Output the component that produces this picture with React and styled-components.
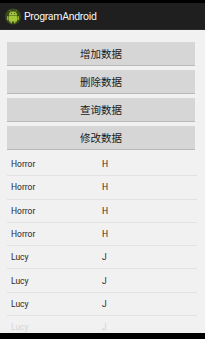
import styled, { createGlobalStyle } from 'styled-components';

const GlobalStyle = createGlobalStyle`
    html, body {
        margin: 0;
        padding: 0;
        background: #000;
    }
    #root {
        width: 205px;
        height: 339px;
        overflow: hidden;
    }
`;

const buttons = ['增加数据', '删除数据', '查询数据', '修改数据'];

const rows = [
    { name: 'Horror', tag: 'H' },
    { name: 'Horror', tag: 'H' },
    { name: 'Horror', tag: 'H' },
    { name: 'Horror', tag: 'H' },
    { name: 'Lucy', tag: 'J' },
    { name: 'Lucy', tag: 'J' },
    { name: 'Lucy', tag: 'J' },
    { name: 'Lucy', tag: 'J', faded: true },
];

const AndroidIcon = () => (
    <svg width="16" height="17" viewBox="0 0 15 16">
        <circle cx="7.5" cy="8" r="7.5" fill="#3a4a1a" />
        <path d="M3.6 7 A3.9 3.6 0 0 1 11.4 7 Z" fill="#a4c639" />
        <line x1="5" y1="3.2" x2="4.2" y2="2.2" stroke="#a4c639" strokeWidth="0.7" />
        <line x1="10" y1="3.2" x2="10.8" y2="2.2" stroke="#a4c639" strokeWidth="0.7" />
        <circle cx="6" cy="5.2" r="0.5" fill="#2a3310" />
        <circle cx="9" cy="5.2" r="0.5" fill="#2a3310" />
        <rect x="3.6" y="7.5" width="7.8" height="5.2" rx="0.8" fill="#a4c639" />
        <rect x="2" y="7.6" width="1.2" height="3.8" rx="0.6" fill="#a4c639" />
        <rect x="11.8" y="7.6" width="1.2" height="3.8" rx="0.6" fill="#a4c639" />
        <rect x="5.2" y="12" width="1.3" height="2.4" rx="0.6" fill="#a4c639" />
        <rect x="8.5" y="12" width="1.3" height="2.4" rx="0.6" fill="#a4c639" />
    </svg>
);

const App = () => {
    return (
        <Screen>
            <GlobalStyle />
            <StatusBar />
            <ActionBar>
                <AndroidIcon />
                <Title>ProgramAndroid</Title>
            </ActionBar>
            <Content>
                <ButtonList>
                    {buttons.map((label) => (
                        <ActionButton key={label}>{label}</ActionButton>
                    ))}
                </ButtonList>
                <DataList>
                    {rows.map((row, idx) => (
                        <Row key={idx} $faded={row.faded}>
                            <Name>{row.name}</Name>
                            <Tag>{row.tag}</Tag>
                        </Row>
                    ))}
                </DataList>
            </Content>
            <NavBar />
        </Screen>
    );
};

// styled-component Section
const Screen = styled.div`
    width: 205px;
    height: 339px;
    display: flex;
    flex-direction: column;
    background: #f2f2f2;
    font-family: 'Roboto', 'Noto Sans CJK SC', sans-serif;
`;

const StatusBar = styled.div`
    height: 3px;
    background: #000;
`;

const ActionBar = styled.div`
    height: 26px;
    display: flex;
    align-items: center;
    gap: 3px;
    padding-left: 5px;
    background: #1f1f1f;
    border-bottom: 1px solid #2b2b2b;
`;

const Title = styled.span`
    color: #f4f4f4;
    font-size: 10.5px;
    letter-spacing: -0.3px;
`;

const Content = styled.div`
    flex: 1;
    overflow: hidden;
    display: flex;
    flex-direction: column;
    background: #f1f1f1;
`;

const ButtonList = styled.div`
    display: flex;
    flex-direction: column;
    gap: 4px;
    padding: 12px 10px 0 7px;
`;

const ActionButton = styled.div`
    height: 23px;
    display: flex;
    align-items: center;
    justify-content: center;
    background: #d6d6d6;
    border-bottom: 1px solid #b9b9b9;
    color: #1a1a1a;
    font-size: 10.5px;
`;

const DataList = styled.div`
    display: flex;
    flex-direction: column;
    padding: 3px 8px 0 7px;
`;

const Row = styled.div`
    height: 22.3px;
    display: flex;
    align-items: center;
    border-bottom: 1px solid #e2e2e2;
    font-size: 8.5px;
    color: #2a2a2a;
    opacity: ${({ $faded }) => ($faded ? 0.15 : 1)};
`;

const Name = styled.span`
    width: 91px;
    padding-left: 4px;
`;

const Tag = styled.span``;

const NavBar = styled.div`
    height: 6px;
    background: #000;
`;

export default App;
